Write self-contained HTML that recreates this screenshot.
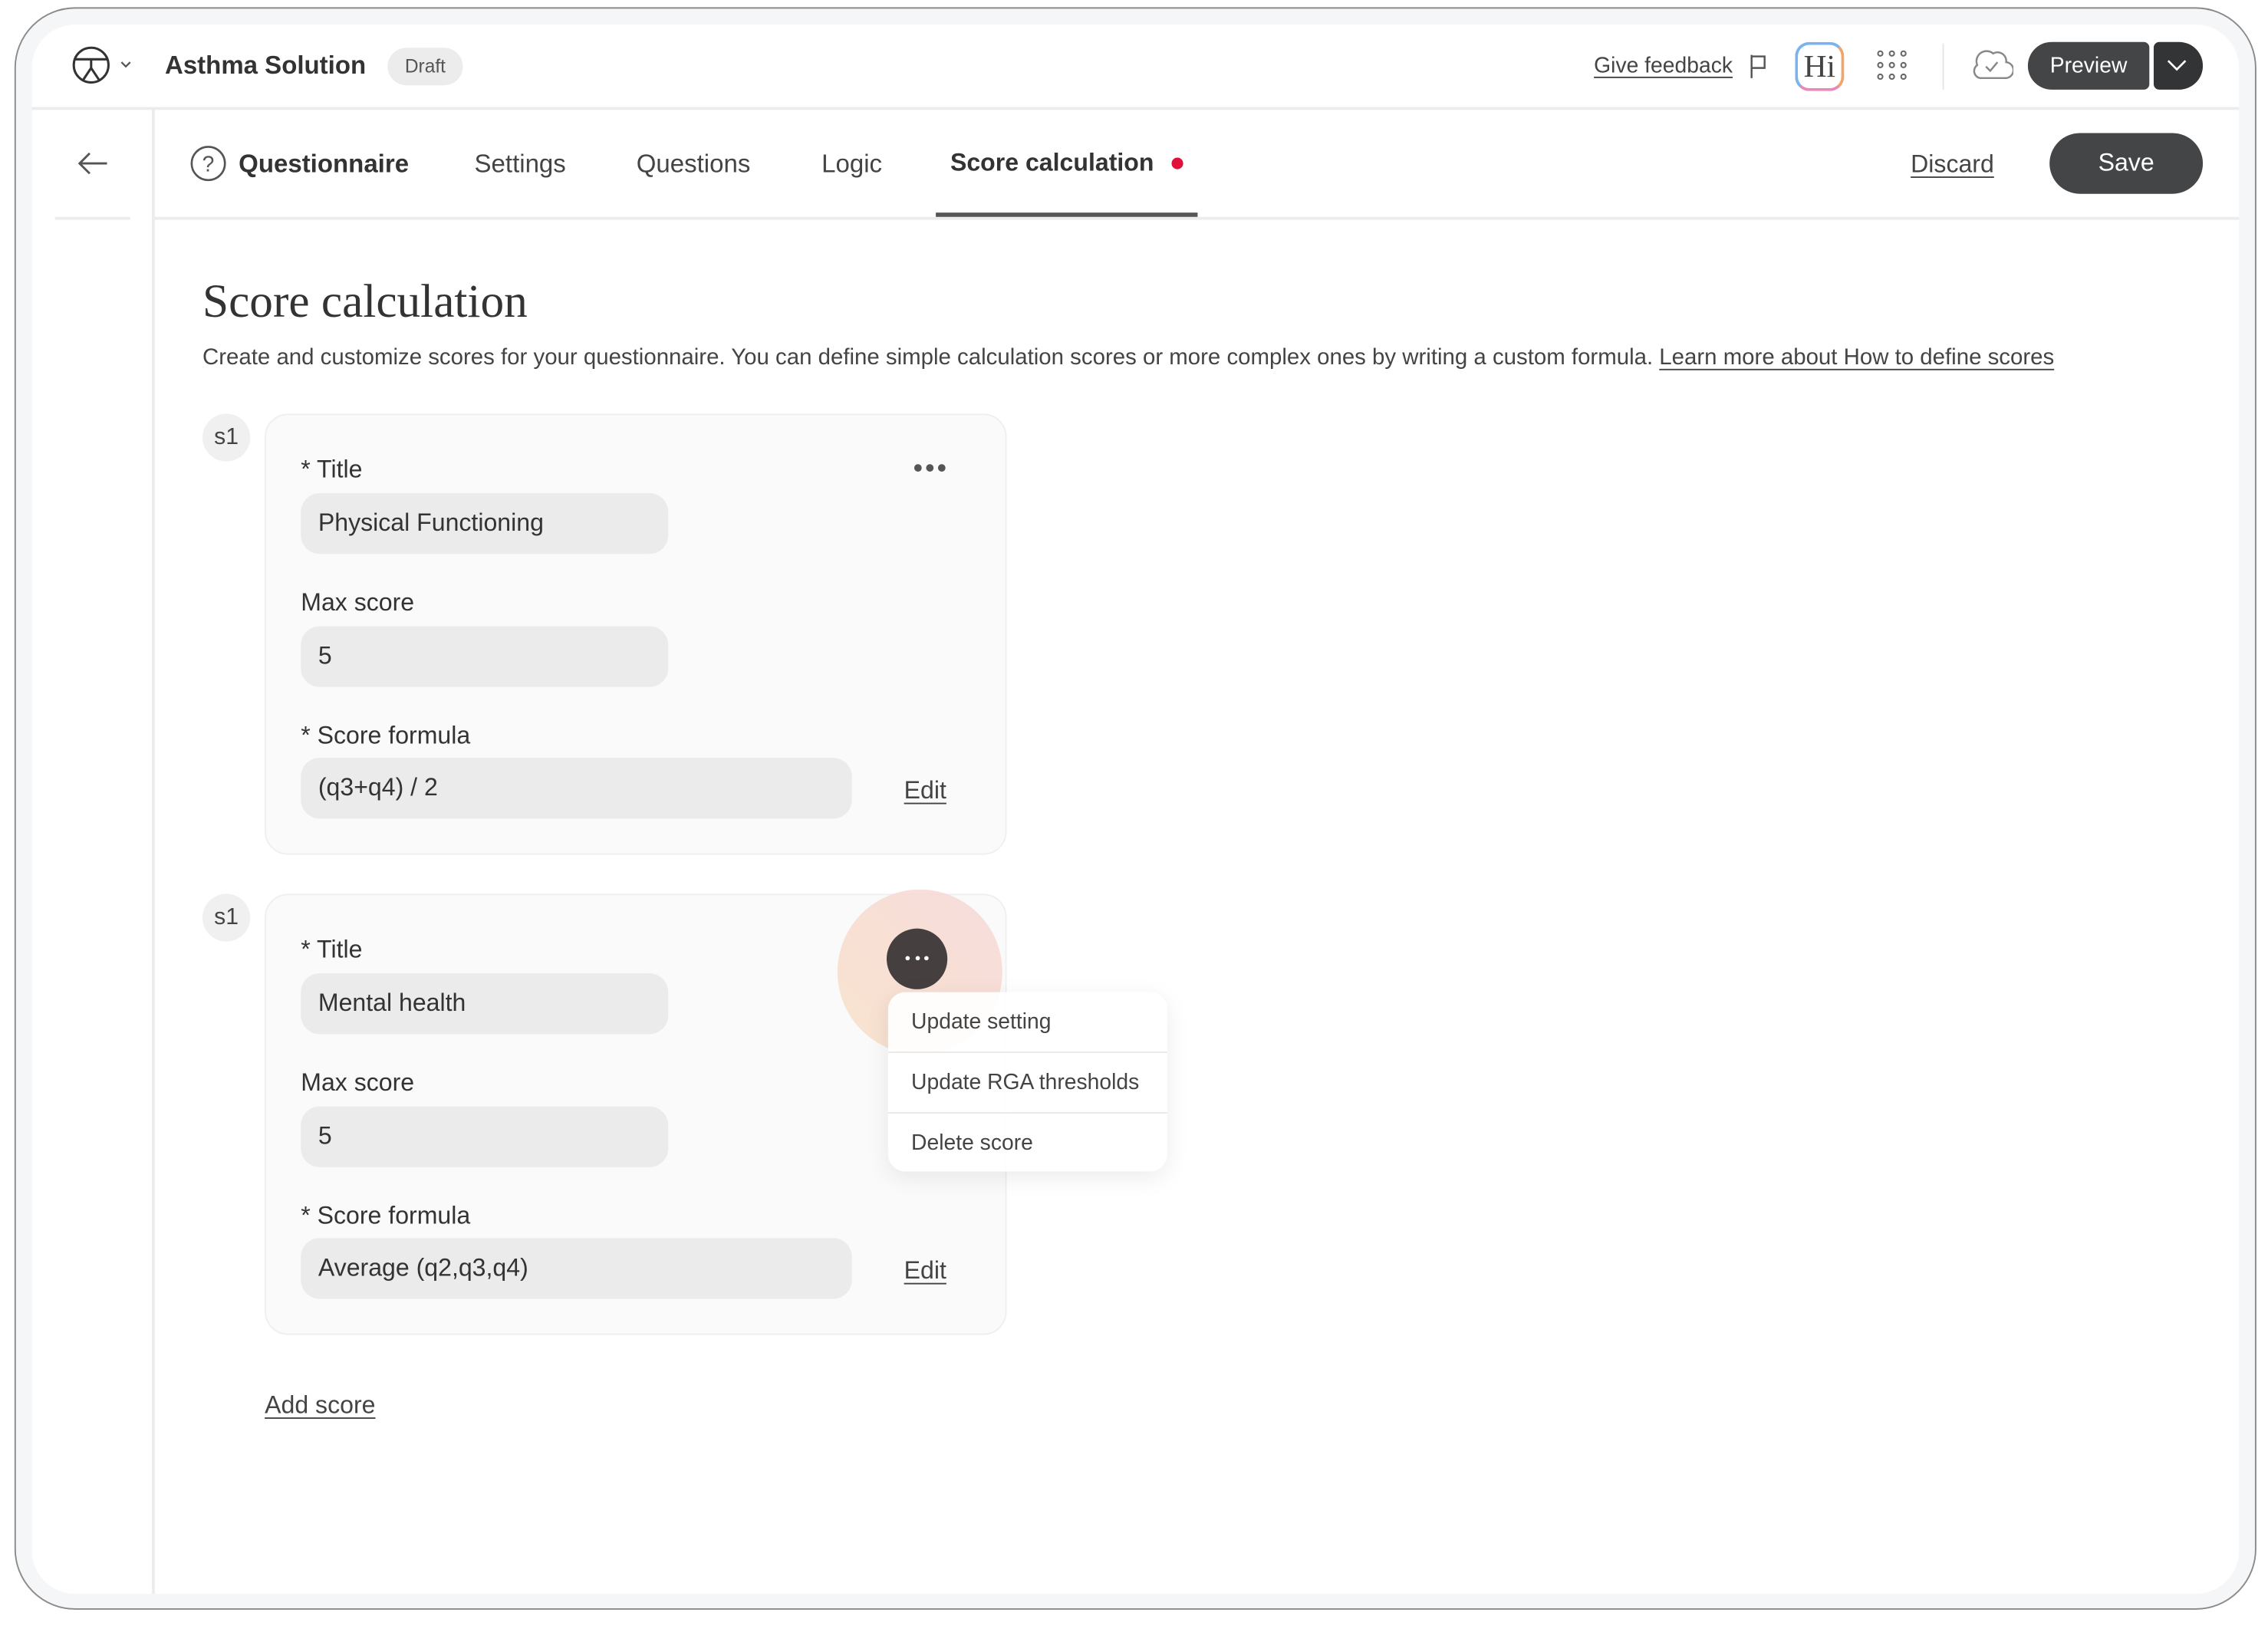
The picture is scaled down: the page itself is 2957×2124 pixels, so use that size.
<!DOCTYPE html>
<html><head><meta charset="utf-8"><style>
*{box-sizing:border-box;margin:0;padding:0}
html,body{width:2957px;height:2124px;overflow:hidden;background:#fff}
#s{position:absolute;left:0;top:0;width:1568px;height:1126px;transform:scale(1.8858);transform-origin:0 0;font-family:"Liberation Sans","DejaVu Sans",sans-serif;color:#333}
.a{position:absolute}
.frame{left:10px;top:5px;width:1550px;height:1108px;border:1.5px solid #8a8a8a;border-radius:42px;background:#f5f6f7}
.inner{left:22px;top:17px;width:1526px;height:1085px;border-radius:30px;background:#fff}
.hl{height:1.5px;background:#ececec}
.tab{top:103px;font-size:17.5px;color:#444}
.lbl{font-size:17px;color:#333}
.fld{background:#ebebeb;border-radius:13px;height:42px;font-size:17px;padding:11px 12px;color:#333}
.card{background:#fafafa;border:1px solid #efefef;border-radius:16px;width:513px;height:305px}
.badge{width:33px;height:33px;border-radius:50%;background:#f0f0f0;font-size:16px;text-align:center;line-height:33px;color:#444}
u{text-decoration:underline;text-underline-offset:3px}
.mi{height:42px;padding:12px 16px;font-size:15px;color:#444;border-bottom:1px solid #e8e8e8}
</style></head><body><div id="s">
<div class="a frame"></div>
<div class="a inner"></div>
<svg class="a" style="left:50px;top:32px" width="46" height="28" viewBox="0 0 46 28"><circle cx="13" cy="13" r="12" fill="none" stroke="#333" stroke-width="1.6"/><path d="M2 9h22M13 9v6M13 15l-6 9M13 15l6 9" fill="none" stroke="#333" stroke-width="1.6"/><path d="M34 11l3 3 3-3" fill="none" stroke="#555" stroke-width="1.2"/></svg>
<div class="a" style="left:114px;top:35px;font-size:17.5px;font-weight:bold;color:#333">Asthma Solution</div>
<div class="a" style="left:268px;top:33px;width:52px;height:26px;border-radius:13px;background:#ececec;font-size:13px;color:#555;text-align:center;line-height:26px">Draft</div>
<div class="a" style="left:1102px;top:37px;font-size:15px;color:#444"><u>Give feedback</u></div>
<svg class="a" style="left:1208px;top:37px" width="16" height="18"><path d="M3 1v16M3 2h9v8H3" fill="none" stroke="#555" stroke-width="1.3"/></svg>
<div class="a" style="left:1241px;top:29px;width:34px;height:34px;border-radius:10px;border:2px solid;border-color:#7ab3f0 #f2a56a #e88ab8 #7ab3f0;font-family:'Liberation Serif',serif;font-size:22px;text-align:center;line-height:29px;color:#444">Hi</div>
<svg class="a" style="left:1297px;top:34px" width="24" height="24"><g fill="none" stroke="#666" stroke-width="1.1"><circle cx="3" cy="3" r="1.6"/><circle cx="11" cy="3" r="1.6"/><circle cx="19" cy="3" r="1.6"/><circle cx="3" cy="11" r="1.6"/><circle cx="11" cy="11" r="1.6"/><circle cx="19" cy="11" r="1.6"/><circle cx="3" cy="19" r="1.6"/><circle cx="11" cy="19" r="1.6"/><circle cx="19" cy="19" r="1.6"/></g></svg>
<div class="a" style="left:1343px;top:30px;width:1px;height:32px;background:#e5e5e5"></div>
<svg class="a" style="left:1362px;top:32px" width="30" height="26"><path d="M7 22a5 5 0 0 1-2-9 7 7 0 0 1 11-8 6 6 0 0 1 9 6 5 5 0 0 1-1 11z" fill="none" stroke="#888" stroke-width="1.3"/><path d="M11 14l3 3 5-6" fill="none" stroke="#888" stroke-width="1.3"/></svg>
<div class="a" style="left:1402px;top:29px;width:84px;height:33px;border-radius:17px 4px 4px 17px;background:#444547;color:#fff;font-size:15px;text-align:center;line-height:33px">Preview</div>
<div class="a" style="left:1489px;top:29px;width:34px;height:33px;border-radius:4px 17px 17px 4px;background:#333436"></div>
<svg class="a" style="left:1497px;top:39px" width="16" height="12"><path d="M2 3l6 6 6-6" fill="none" stroke="#fff" stroke-width="1.4"/></svg>
<div class="a hl" style="left:22px;top:74px;width:1526px"></div>
<div class="a" style="left:105px;top:75px;width:1.5px;height:1027px;background:#ececec"></div>
<svg class="a" style="left:52px;top:104px" width="24" height="18"><path d="M22 9H3M10 2L3 9l7 7" fill="none" stroke="#555" stroke-width="1.5"/></svg>
<div class="a hl" style="left:38px;top:150px;width:52px"></div>
<svg class="a" style="left:131px;top:100px" width="26" height="26"><circle cx="13" cy="13" r="11.5" fill="none" stroke="#555" stroke-width="1.4"/><text x="13" y="18.5" text-anchor="middle" font-size="15" fill="#555" font-family="Liberation Sans">?</text></svg>
<div class="a tab" style="left:165px;font-weight:bold;color:#333">Questionnaire</div>
<div class="a tab" style="left:328px">Settings</div>
<div class="a tab" style="left:440px">Questions</div>
<div class="a tab" style="left:568px">Logic</div>
<div class="a tab" style="left:657px;font-weight:bold;color:#333;font-size:17px">Score calculation</div>
<div class="a" style="left:810px;top:109px;width:8px;height:8px;border-radius:50%;background:#e0103a"></div>
<div class="a" style="left:647px;top:147px;width:181px;height:3px;background:#555"></div>
<div class="a hl" style="left:106px;top:150px;width:1442px"></div>
<div class="a" style="left:1321px;top:104px;font-size:17px;color:#444"><u>Discard</u></div>
<div class="a" style="left:1417px;top:92px;width:106px;height:42px;border-radius:21px;background:#444547;color:#fff;font-size:17px;text-align:center;line-height:42px">Save</div>
<div class="a" style="left:140px;top:191px;font-family:'Liberation Serif',serif;font-size:32.5px;color:#333">Score calculation</div>
<div class="a" style="left:140px;top:239px;font-size:15.6px;color:#444;white-space:nowrap">Create and customize scores for your questionnaire. You can define simple calculation scores or more complex ones by writing a custom formula. <u>Learn more about How to define scores</u></div>
<div class="a badge" style="left:140px;top:286px">s1</div>
<div class="a card" style="left:183px;top:286px"></div>
<div class="a lbl" style="left:208px;top:315px">* Title</div>
<div class="a" style="left:631px;top:316px;font-size:12px;letter-spacing:1px;color:#555">●●●</div>
<div class="a fld" style="left:208px;top:341px;width:254px">Physical Functioning</div>
<div class="a lbl" style="left:208px;top:407px">Max score</div>
<div class="a fld" style="left:208px;top:433px;width:254px">5</div>
<div class="a lbl" style="left:208px;top:499px">* Score formula</div>
<div class="a fld" style="left:208px;top:524px;width:381px">(q3+q4) / 2</div>
<div class="a" style="left:625px;top:537px;font-size:17px;color:#444"><u>Edit</u></div>
<div class="a badge" style="left:140px;top:618px">s1</div>
<div class="a card" style="left:183px;top:618px"></div>
<div class="a lbl" style="left:208px;top:647px">* Title</div>
<div class="a fld" style="left:208px;top:673px;width:254px">Mental health</div>
<div class="a lbl" style="left:208px;top:739px">Max score</div>
<div class="a fld" style="left:208px;top:765px;width:254px">5</div>
<div class="a lbl" style="left:208px;top:831px">* Score formula</div>
<div class="a fld" style="left:208px;top:856px;width:381px">Average (q2,q3,q4)</div>
<div class="a" style="left:625px;top:869px;font-size:17px;color:#444"><u>Edit</u></div>
<div class="a" style="left:579px;top:615px;width:114px;height:114px;border-radius:50%;background:linear-gradient(45deg,#f8dfc6,#f6d7d7);opacity:.85"></div>
<div class="a" style="left:613px;top:642px;width:42px;height:42px;border-radius:50%;background:#453f3f"></div>
<div class="a" style="left:626px;top:661px;width:16px;height:4px;display:flex;justify-content:space-between"><i style="width:3px;height:3px;border-radius:50%;background:#fff"></i><i style="width:3px;height:3px;border-radius:50%;background:#fff"></i><i style="width:3px;height:3px;border-radius:50%;background:#fff"></i></div>
<div class="a" style="left:614px;top:686px;width:193px;height:124px;border-radius:12px;background:rgba(255,255,255,.92);box-shadow:0 4px 16px rgba(0,0,0,.08);overflow:hidden">
<div class="mi">Update setting</div><div class="mi">Update RGA thresholds</div><div class="mi" style="border:0">Delete score</div></div>
<div class="a" style="left:183px;top:962px;font-size:17px;color:#444"><u>Add score</u></div>
</div></body></html>
